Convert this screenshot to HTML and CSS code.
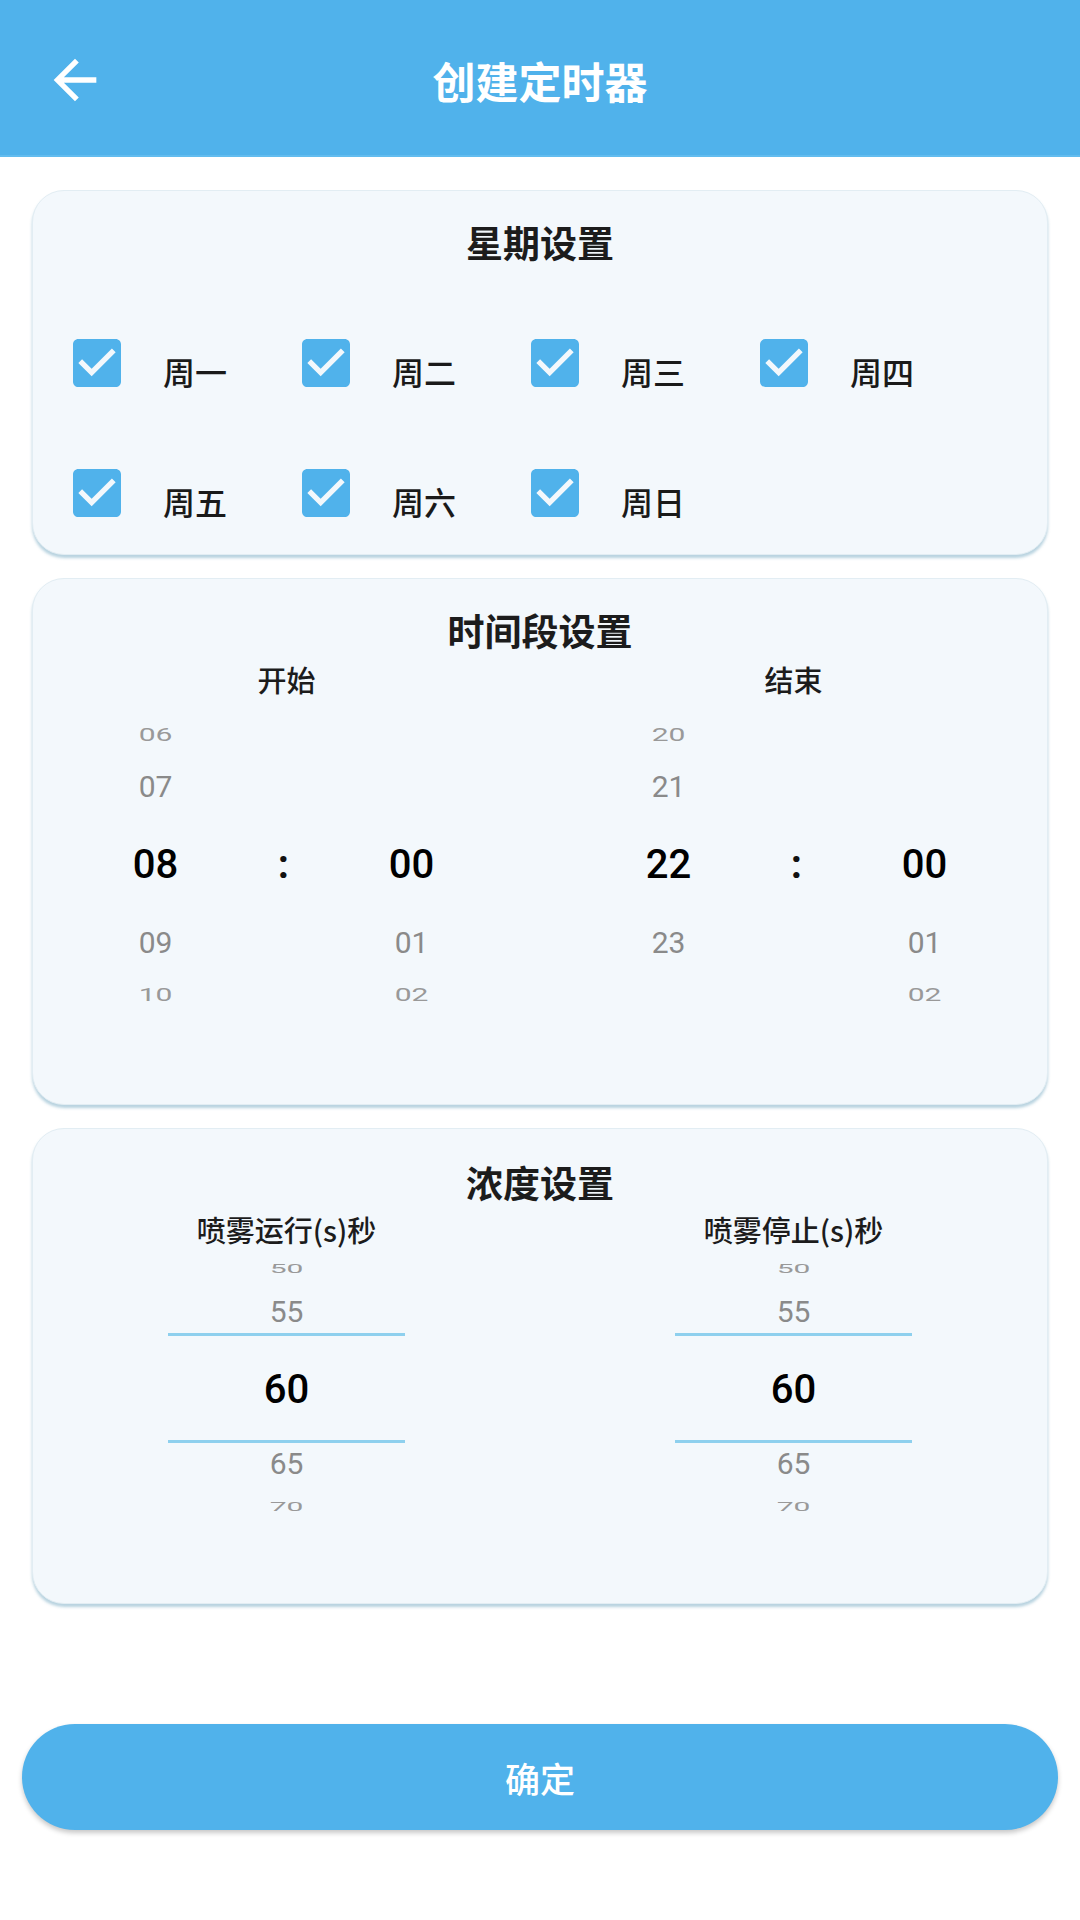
FILE: index.html
```html
<!DOCTYPE html>
<html lang="zh-CN">
<head>
<meta charset="utf-8">
<title>创建定时器</title>
<link rel="stylesheet" href="styles.css">
</head>
<body>
<header class="header">
  <div class="back">
    <svg width="64" height="64" viewBox="0 0 24 24"><path fill="#fff" d="M20 11H7.83l5.59-5.59L12 4l-8 8 8 8 1.41-1.41L7.83 13H20v-2z"/></svg>
  </div>
  <div class="header-title">创建定时器</div>
  <div></div>
</header>

<main class="content">
  <section class="card week">
    <div class="card-title">星期设置</div>
    <div class="week-grid">
      <div class="day"><svg class="cb" viewBox="3 3 18 18"><path fill="#50B2EB" d="M19 3H5c-1.11 0-2 .9-2 2v14c0 1.1.89 2 2 2h14c1.11 0 2-.9 2-2V5c0-1.1-.89-2-2-2zm-9 14l-5-5 1.41-1.41L10 14.17l7.59-7.59L19 8l-9 9z"/></svg><span class="day-label">周一</span></div>
      <div class="day"><svg class="cb" viewBox="3 3 18 18"><path fill="#50B2EB" d="M19 3H5c-1.11 0-2 .9-2 2v14c0 1.1.89 2 2 2h14c1.11 0 2-.9 2-2V5c0-1.1-.89-2-2-2zm-9 14l-5-5 1.41-1.41L10 14.17l7.59-7.59L19 8l-9 9z"/></svg><span class="day-label">周二</span></div>
      <div class="day"><svg class="cb" viewBox="3 3 18 18"><path fill="#50B2EB" d="M19 3H5c-1.11 0-2 .9-2 2v14c0 1.1.89 2 2 2h14c1.11 0 2-.9 2-2V5c0-1.1-.89-2-2-2zm-9 14l-5-5 1.41-1.41L10 14.17l7.59-7.59L19 8l-9 9z"/></svg><span class="day-label">周三</span></div>
      <div class="day"><svg class="cb" viewBox="3 3 18 18"><path fill="#50B2EB" d="M19 3H5c-1.11 0-2 .9-2 2v14c0 1.1.89 2 2 2h14c1.11 0 2-.9 2-2V5c0-1.1-.89-2-2-2zm-9 14l-5-5 1.41-1.41L10 14.17l7.59-7.59L19 8l-9 9z"/></svg><span class="day-label">周四</span></div>
      <div class="day"><svg class="cb" viewBox="3 3 18 18"><path fill="#50B2EB" d="M19 3H5c-1.11 0-2 .9-2 2v14c0 1.1.89 2 2 2h14c1.11 0 2-.9 2-2V5c0-1.1-.89-2-2-2zm-9 14l-5-5 1.41-1.41L10 14.17l7.59-7.59L19 8l-9 9z"/></svg><span class="day-label">周五</span></div>
      <div class="day"><svg class="cb" viewBox="3 3 18 18"><path fill="#50B2EB" d="M19 3H5c-1.11 0-2 .9-2 2v14c0 1.1.89 2 2 2h14c1.11 0 2-.9 2-2V5c0-1.1-.89-2-2-2zm-9 14l-5-5 1.41-1.41L10 14.17l7.59-7.59L19 8l-9 9z"/></svg><span class="day-label">周六</span></div>
      <div class="day"><svg class="cb" viewBox="3 3 18 18"><path fill="#50B2EB" d="M19 3H5c-1.11 0-2 .9-2 2v14c0 1.1.89 2 2 2h14c1.11 0 2-.9 2-2V5c0-1.1-.89-2-2-2zm-9 14l-5-5 1.41-1.41L10 14.17l7.59-7.59L19 8l-9 9z"/></svg><span class="day-label">周日</span></div>
    </div>
  </section>

  <section class="card time">
    <div class="card-title">时间段设置</div>
    <div class="halves">
      <div class="half">
        <div class="sub">开始</div>
        <div class="wheel3 wheel-left">
          <div class="col">
            <div class="slot far"><span class="num">06</span></div>
            <div class="slot near"><span class="num">07</span></div>
            <div class="slot sel"><span class="num">08</span></div>
            <div class="slot near"><span class="num">09</span></div>
            <div class="slot far"><span class="num">10</span></div>
          </div>
          <div class="col">
            <div class="slot far"></div>
            <div class="slot near"></div>
            <div class="slot sel"><span class="colon">:</span></div>
            <div class="slot near"></div>
            <div class="slot far"></div>
          </div>
          <div class="col">
            <div class="slot far"></div>
            <div class="slot near"></div>
            <div class="slot sel"><span class="num">00</span></div>
            <div class="slot near"><span class="num">01</span></div>
            <div class="slot far"><span class="num">02</span></div>
          </div>
        </div>
      </div>
      <div class="half">
        <div class="sub">结束</div>
        <div class="wheel3 wheel-right">
          <div class="col">
            <div class="slot far"><span class="num">20</span></div>
            <div class="slot near"><span class="num">21</span></div>
            <div class="slot sel"><span class="num">22</span></div>
            <div class="slot near"><span class="num">23</span></div>
            <div class="slot far"></div>
          </div>
          <div class="col">
            <div class="slot far"></div>
            <div class="slot near"></div>
            <div class="slot sel"><span class="colon">:</span></div>
            <div class="slot near"></div>
            <div class="slot far"></div>
          </div>
          <div class="col">
            <div class="slot far"></div>
            <div class="slot near"></div>
            <div class="slot sel"><span class="num">00</span></div>
            <div class="slot near"><span class="num">01</span></div>
            <div class="slot far"><span class="num">02</span></div>
          </div>
        </div>
      </div>
    </div>
  </section>

  <section class="card conc">
    <div class="card-title">浓度设置</div>
    <div class="halves">
      <div class="half">
        <div class="sub">喷雾运行(s)秒</div>
        <div class="wheel1">
          <div class="col">
            <div class="slot far"><span class="num">50</span></div>
            <div class="slot near"><span class="num">55</span></div>
            <div class="slot sel"><span class="num">60</span></div>
            <div class="slot near"><span class="num">65</span></div>
            <div class="slot far"><span class="num">70</span></div>
          </div>
        </div>
      </div>
      <div class="half">
        <div class="sub">喷雾停止(s)秒</div>
        <div class="wheel1">
          <div class="col">
            <div class="slot far"><span class="num">50</span></div>
            <div class="slot near"><span class="num">55</span></div>
            <div class="slot sel"><span class="num">60</span></div>
            <div class="slot near"><span class="num">65</span></div>
            <div class="slot far"><span class="num">70</span></div>
          </div>
        </div>
      </div>
    </div>
  </section>
</main>

<div class="footer">
  <div class="btn">确定</div>
</div>
</body>
</html>
```

FILE: styles.css
```css
* { box-sizing: border-box; }

body {
  margin: 0;
  width: 1080px;
  height: 1920px;
  background: #ffffff;
  font-family: "Noto Sans CJK SC", "Noto Sans", sans-serif;
  color: #1c1c1c;
}

.header {
  height: 157px;
  background: #50B2EB;
  display: grid;
  grid-template-columns: 1fr auto 1fr;
  align-items: center;
  padding-top: 3px;
  box-shadow: inset 0 -2px 0 #62bcef;
}

.back {
  padding-left: 43px;
  display: flex;
  align-items: center;
}

.back svg { display: block; }

.header-title {
  color: #ffffff;
  font-size: 43px;
  font-weight: 700;
  line-height: 1;
}

.content {
  padding: 33px 32px 0;
  display: flex;
  flex-direction: column;
  gap: 23px;
}

.card {
  background: #F3F8FC;
  border: 1px solid #e2edf3;
  border-radius: 32px;
  box-shadow: 0 3px 3px rgba(95, 155, 185, 0.45);
}

.card-title {
  font-size: 37px;
  font-weight: 700;
  line-height: 44px;
  text-align: center;
  color: #1c1c1c;
}

/* week card */
.week { padding: 29px 0 37px; }

.week-grid {
  margin-top: 75px;
  padding-left: 40px;
  display: grid;
  grid-template-columns: repeat(4, 229px);
  grid-auto-rows: 48px;
  row-gap: 82px;
}

.day {
  display: flex;
  align-items: flex-start;
}

.cb {
  width: 48px;
  height: 48px;
  display: block;
  flex: none;
}

.day-label {
  margin-left: 42px;
  margin-top: 16px;
  font-size: 32px;
  line-height: 32px;
  font-weight: 500;
  color: #1a1a1a;
}

/* pickers */
.time { padding: 29px 0 83px; }
.conc { padding: 31px 0 74px; }

.halves {
  display: grid;
  grid-template-columns: 1fr 1fr;
}

.sub {
  margin-top: 9px;
  font-size: 29px;
  line-height: 36px;
  text-align: center;
  font-weight: 500;
  color: #1c1c1c;
}

.conc .sub { margin-top: 7px; }

.wheel3 {
  margin-top: 12px;
  display: grid;
  grid-template-columns: repeat(3, 128px);
  justify-content: center;
}

.wheel-left { padding-right: 6px; }
.wheel-right { padding-left: 6px; }

.wheel1 {
  display: grid;
  grid-template-columns: 237px;
  justify-content: center;
}

.col {
  display: flex;
  flex-direction: column;
}

.slot {
  display: flex;
  align-items: center;
  justify-content: center;
}

.time .far { height: 52px; }
.time .near { height: 52px; }
.time .sel { height: 104px; }

.conc .far { height: 44px; }
.conc .near { height: 42px; }
.conc .sel {
  height: 110px;
  padding-top: 4px;
  border-top: 3px solid #8ed0ee;
  border-bottom: 3px solid #8ed0ee;
}

.num {
  display: inline-block;
  font-family: Roboto, "Noto Sans", sans-serif;
  font-weight: 400;
  line-height: 1;
}

.sel .num {
  font-size: 40px;
  font-weight: 500;
  color: #000000;
}

.near .num {
  font-size: 30px;
  color: #8a8a8a;
}

.far .num {
  font-size: 30px;
  color: #999999;
  transform: scaleY(0.6);
}

.conc .far .num { transform: scaleY(0.42); }

.colon {
  font-family: Roboto, "Noto Sans", sans-serif;
  font-size: 40px;
  font-weight: 700;
  line-height: 1;
  color: #111111;
}

.footer {
  margin-top: 120px;
  padding: 0 22px;
}

.btn {
  height: 106px;
  border-radius: 53px;
  background: #50B2EB;
  color: #ffffff;
  font-size: 35px;
  font-weight: 500;
  display: flex;
  align-items: center;
  justify-content: center;
  box-shadow: 0 3px 5px rgba(0, 0, 0, 0.22);
}
```
